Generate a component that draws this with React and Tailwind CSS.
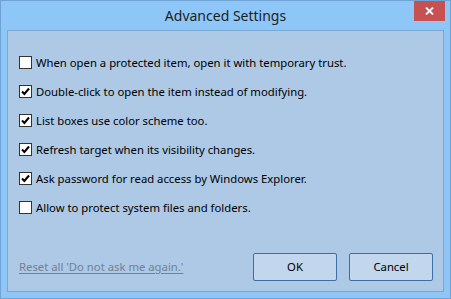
import React, { useState } from 'react';

const options = [
  { label: 'When open a protected item, open it with temporary trust.', checked: false },
  { label: 'Double-click to open the item instead of modifying.', checked: true },
  { label: 'List boxes use color scheme too.', checked: true },
  { label: 'Refresh target when its visibility changes.', checked: true },
  { label: 'Ask password for read access by Windows Explorer.', checked: true },
  { label: 'Allow to protect system files and folders.', checked: false },
];

function CheckBox({ checked }) {
  return (
    <span className="w-[13px] h-[13px] border border-[#333333] bg-white flex items-center justify-center shrink-0">
      {checked && (
        <svg width="9" height="9" viewBox="0 0 9 9">
          <path d="M1 4.5 L3.4 7 L8 1.5" fill="none" stroke="#000" strokeWidth="2" />
        </svg>
      )}
    </span>
  );
}

export default function App() {
  const [items, setItems] = useState(options);

  const toggle = (i) => {
    setItems((prev) => prev.map((it, idx) => (idx === i ? { ...it, checked: !it.checked } : it)));
  };

  return (
    <div
      className="w-[451px] h-[299px] bg-[#8ec6f8] border border-[#6fa3d6] flex flex-col text-black"
      style={{ fontFamily: '"Noto Sans", "Open Sans", sans-serif' }}
    >
      {/* Title bar */}
      <div className="relative h-[29px] flex items-center justify-center">
        <span className="text-[14px] text-[#1e1e1e] mt-[-1px]">Advanced Settings</span>
        <button className="absolute top-0 right-[5px] w-[31px] h-[20px] bg-[#c75050] flex items-center justify-center">
          <svg width="9" height="8" viewBox="0 0 9 8">
            <path d="M1 0.5 L8 7.5 M8 0.5 L1 7.5" stroke="#fff" strokeWidth="1.8" />
          </svg>
        </button>
      </div>

      {/* Client area */}
      <div className="flex-1 mx-[6px] mb-[6px] border border-[#78a8d6] bg-[#adc9e6] flex flex-col">
        <div className="pt-[25px] pl-[11px] flex flex-col gap-[16px]">
          {items.map((it, i) => (
            <label key={i} className="flex items-center gap-[4px] h-[13px] text-[11.3px] cursor-default" onClick={() => toggle(i)}>
              <CheckBox checked={it.checked} />
              <span className="leading-none whitespace-nowrap">{it.label}</span>
            </label>
          ))}
        </div>

        <div className="mt-auto flex items-center pl-[11px] pr-[10px] pb-[10px]">
          <a href="#" className="text-[11.3px] text-[#6f8296] underline underline-offset-2">
            Reset all 'Do not ask me again.'
          </a>
          <div className="ml-auto flex gap-[12px]">
            <button className="w-[84px] h-[28px] rounded-[2px] border border-[#3c6fa6] bg-[#c2d7ed] text-[11.3px]">OK</button>
            <button className="w-[84px] h-[28px] rounded-[2px] border border-[#3c6fa6] bg-[#c2d7ed] text-[11.3px]">Cancel</button>
          </div>
        </div>
      </div>
    </div>
  );
}
